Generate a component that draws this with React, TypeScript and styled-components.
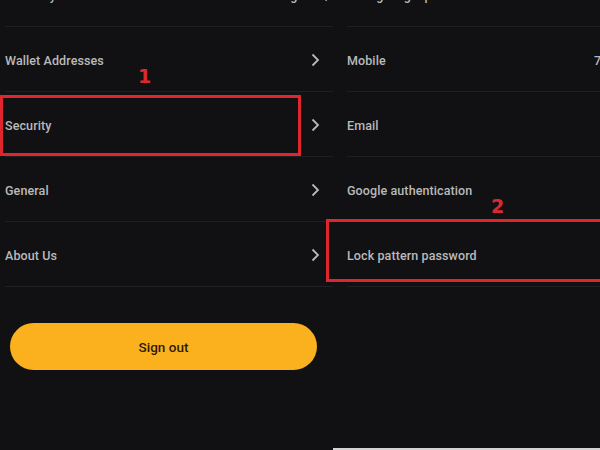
import React from "react";
import styled, { createGlobalStyle } from "styled-components";

const Global = createGlobalStyle`
  html, body { margin: 0; padding: 0; background: #111114; overflow: hidden; }
  body { font-family: Roboto, "Noto Sans", sans-serif; }
`;

const Screen = styled.div`
  display: flex;
  width: 600px;
  height: 450px;
  background: #111114;
  overflow: hidden;
  position: relative;
`;

const Panel = styled.div<{ $w: number }>`
  width: ${(p) => p.$w}px;
  flex-shrink: 0;
  display: flex;
  flex-direction: column;
  position: relative;
  overflow: visible;
`;

const List = styled.div<{ $pad: number }>`
  display: flex;
  flex-direction: column;
  margin-top: -38px;
  padding-left: ${(p) => p.$pad}px;
`;

const Row = styled.div<{ $cols: string }>`
  position: relative;
  height: 65px;
  padding-top: 2px;
  display: grid;
  grid-template-columns: ${(p) => p.$cols};
  align-items: center;
  border-bottom: 1px solid #1f1f24;
  box-sizing: border-box;
`;

const Label = styled.span`
  font-size: 12.5px;
  font-weight: 500;
  color: #bababa;
  letter-spacing: 0.1px;
  white-space: nowrap;
`;

const Value = styled.span`
  font-size: 12.5px;
  font-weight: 500;
  color: #bababa;
  white-space: nowrap;
  justify-self: end;
  display: flex;
  align-items: center;
  gap: 6px;
`;

const Chevron = styled.svg`
  justify-self: end;
  width: 10px;
  height: 14px;
`;

const Arrow = () => (
  <Chevron viewBox="0 0 10 14">
    <path d="M2.5 1.5 L8 7 L2.5 12.5" fill="none" stroke="#b8b8b8" strokeWidth="1.8" />
  </Chevron>
);

const Mark = styled.div<{ $l: number; $t: number; $w: number; $h: number }>`
  position: absolute;
  left: ${(p) => p.$l}px;
  top: ${(p) => p.$t}px;
  width: ${(p) => p.$w}px;
  height: ${(p) => p.$h}px;
  border: 3px solid #e0262d;
  box-sizing: border-box;
  pointer-events: none;
`;

const Num = styled.span<{ $l: number; $t: number }>`
  position: absolute;
  left: ${(p) => p.$l}px;
  top: ${(p) => p.$t}px;
  font-family: "DejaVu Sans", sans-serif;
  font-weight: 700;
  font-size: 19px;
  color: #db2a2f;
  line-height: 1;
`;

const ButtonWrap = styled.div`
  padding: 36px 16px 0 10px;
`;

const SignOut = styled.button`
  width: 100%;
  height: 47px;
  border: none;
  border-radius: 24px;
  background: #fbb11d;
  color: #2b1c0a;
  font-family: Roboto, sans-serif;
  font-size: 13.5px;
  font-weight: 500;
  cursor: pointer;
`;

const BottomEdge = styled.div`
  position: absolute;
  left: 0;
  right: 0;
  bottom: 0;
  height: 2px;
  background: #d4d4d4;
`;

export default function App() {
  return (
    <>
      <Global />
      <Screen>
        <Panel $w={333}>
          <List $pad={5}>
            <Row $cols="1fr auto">
              <Label>Currency</Label>
              <Value>
                English <Arrow />
              </Value>
            </Row>
            <Row $cols="1fr auto 13px">
              <Label>Wallet Addresses</Label>
              <Arrow />
              <span />
            </Row>
            <Row $cols="1fr auto 13px">
              <Label>Security</Label>
              <Arrow />
              <span />
              <Mark $l={-5} $t={3} $w={301} $h={61} />
              <Num $l={133} $t={-25}>1</Num>
            </Row>
            <Row $cols="1fr auto 13px">
              <Label>General</Label>
              <Arrow />
              <span />
            </Row>
            <Row $cols="1fr auto 13px">
              <Label>About Us</Label>
              <Arrow />
              <span />
            </Row>
          </List>
          <ButtonWrap>
            <SignOut>Sign out</SignOut>
          </ButtonWrap>
        </Panel>
        <Panel $w={267}>
          <List $pad={14}>
            <Row $cols="1fr">
              <Label>Change login password</Label>
            </Row>
            <Row $cols="247px auto">
              <Label>Mobile</Label>
              <Label>7*****8</Label>
            </Row>
            <Row $cols="1fr">
              <Label>Email</Label>
            </Row>
            <Row $cols="1fr">
              <Label>Google authentication</Label>
              <Num $l={144} $t={40}>2</Num>
            </Row>
            <Row $cols="1fr">
              <Label>Lock pattern password</Label>
              <Mark $l={-21} $t={-3} $w={300} $h={63} />
            </Row>
          </List>
          <BottomEdge />
        </Panel>
      </Screen>
    </>
  );
}
